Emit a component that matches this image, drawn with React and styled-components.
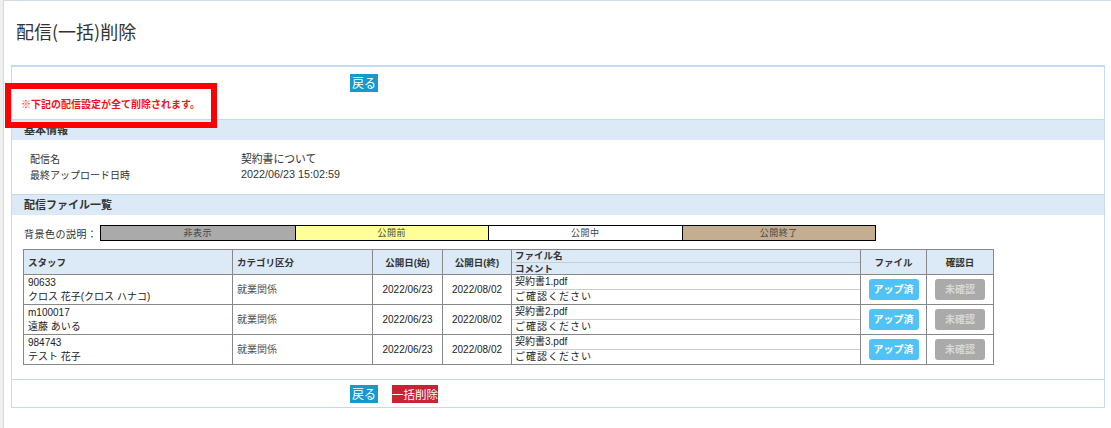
import styled, { createGlobalStyle } from "styled-components";

const GlobalStyle = createGlobalStyle`
  html { background: #efefef; }
  body {
    margin: 0;
    font-family: "Liberation Sans", "Noto Sans CJK JP", sans-serif;
    color: #333;
  }
`;

const rows = [
  { id: "90633", name: "クロス 花子(クロス ハナコ)", file: "契約書1.pdf" },
  { id: "m100017", name: "遠藤 あいる", file: "契約書2.pdf" },
  { id: "984743", name: "テスト 花子", file: "契約書3.pdf" },
];

const legend = [
  { label: "非表示", bg: "#aaaaaa" },
  { label: "公開前", bg: "#ffff99" },
  { label: "公開中", bg: "#ffffff" },
  { label: "公開終了", bg: "#c4ae90" },
];

const Root = styled.div`
  position: relative;
`;

const Page = styled.div`
  margin-left: 3px;
  min-height: 427px;
  background: #fff;
  border-left: 1px solid #d3dbe3;
  border-top: 1px solid #d3dbe3;
`;

const Title = styled.h1`
  margin: 0 0 20px;
  padding: 16px 0 0 12px;
  font-family: "Noto Sans CJK JP", sans-serif;
  font-size: 18px;
  line-height: 28px;
  font-weight: normal;
  color: #333;
`;

const Panel = styled.div`
  margin: 0 6px 0 7px;
  border: 1px solid #c3daef;
  border-top-width: 2px;
`;

const TopBar = styled.div`
  padding: 7px 0 8px;
`;

const ButtonRow = styled.div`
  display: flex;
  gap: 14px;
  padding-left: 338px;
`;

const Button = styled.button`
  border: 0;
  border-radius: 0;
  margin: 0;
  padding: 0 ${(p) => p.$pad ?? 2}px;
  height: 18px;
  font-family: "Noto Sans CJK JP", sans-serif;
  font-size: ${(p) => p.$size || 12}px;
  line-height: 18px;
  color: #fff;
  background: ${(p) => p.$bg || "#1799cc"};
`;

const Warning = styled.div`
  margin-top: 7px;
  padding-left: 9px;
  font-size: 10px;
  line-height: 12px;
  font-weight: bold;
  color: #f01515;
`;

const SectionHeader = styled.div`
  height: 20px;
  line-height: 20px;
  padding-left: 12px;
  border-top: 1px solid #c3daef;
  background: #dce9f7;
  font-size: 11px;
  font-weight: bold;
  color: #333;
`;

const InfoGrid = styled.div`
  display: grid;
  grid-template-columns: 211px 1fr;
  grid-auto-rows: 16px;
  align-items: center;
  padding: 10px 0 12px 18px;
  font-size: 10px;
`;

const InfoValue = styled.span`
  font-size: 10.8px;
`;

const Legend = styled.div`
  display: flex;
  align-items: center;
  margin-top: 10px;
  padding-left: 12px;
  font-size: 10px;
  letter-spacing: 0.5px;
`;

const LegendLabel = styled.span`
  width: 76px;
`;

const LegendBar = styled.div`
  display: grid;
  grid-template-columns: repeat(4, 1fr);
  width: 776px;
  height: 16px;
  border: 1px solid #000;
  box-sizing: border-box;
`;

const LegendCell = styled.div`
  background: ${(p) => p.$bg};
  border-left: ${(p) => (p.$first ? "0" : "1px solid #000")};
  text-align: center;
  font-size: 9px;
  line-height: 14px;
  color: #444;
`;

const Table = styled.table`
  margin: 8px 0 0 11px;
  width: 971px;
  table-layout: fixed;
  border-collapse: collapse;
  font-size: 10px;
`;

const Th = styled.th`
  height: 24px;
  padding: 0 ${(p) => (p.$flush ? 0 : 4)}px;
  border: 1px solid #888;
  background: #dce9f7;
  font-size: 9.5px;
  font-weight: bold;
  text-align: ${(p) => p.$align || "center"};
  color: #333;
`;

const Td = styled.td`
  height: 29px;
  padding: 0 ${(p) => (p.$flush ? 0 : 4)}px;
  border: 1px solid #888;
  text-align: ${(p) => p.$align || "left"};
  line-height: 14px;
  color: ${(p) => (p.$muted ? "#555" : "#222")};
`;

const SubLine = styled.div`
  height: ${(p) => p.$h}px;
  line-height: ${(p) => p.$h}px;
  padding-left: 3px;
  letter-spacing: ${(p) => (p.$spaced ? 1 : 0)}px;
  border-bottom: ${(p) => (p.$last ? "0" : "1px solid #ccc")};
`;

const Pill = styled.span`
  display: inline-block;
  width: 50px;
  height: 21px;
  line-height: 21px;
  border-radius: 3px;
  background: ${(p) => p.$bg};
  color: ${(p) => p.$fg};
  font-size: 10px;
  font-weight: bold;
  text-align: center;
  vertical-align: middle;
`;

const Footer = styled.div`
  margin-top: 14px;
  padding: 5px 0 4px;
  border-top: 1px solid #c3daef;
`;

const Annotation = styled.div`
  position: absolute;
  left: 5px;
  top: 83px;
  width: 212px;
  height: 45px;
  box-sizing: border-box;
  border: 6px solid #ff0000;
  pointer-events: none;
`;

export default function App() {
  return (
    <Root>
      <GlobalStyle />
      <Page>
        <Title>配信(一括)削除</Title>
        <Panel>
          <TopBar>
            <ButtonRow>
              <Button>戻る</Button>
            </ButtonRow>
            <Warning>※下記の配信設定が全て削除されます。</Warning>
          </TopBar>

          <SectionHeader>基本情報</SectionHeader>
          <InfoGrid>
            <span>配信名</span>
            <InfoValue>契約書について</InfoValue>
            <span>最終アップロード日時</span>
            <InfoValue>2022/06/23 15:02:59</InfoValue>
          </InfoGrid>

          <SectionHeader>配信ファイル一覧</SectionHeader>
          <Legend>
            <LegendLabel>背景色の説明：</LegendLabel>
            <LegendBar>
              {legend.map((l, i) => (
                <LegendCell key={l.label} $bg={l.bg} $first={i === 0}>
                  {l.label}
                </LegendCell>
              ))}
            </LegendBar>
          </Legend>

          <Table>
            <colgroup>
              <col style={{ width: 209 }} />
              <col style={{ width: 140 }} />
              <col style={{ width: 70 }} />
              <col style={{ width: 69 }} />
              <col style={{ width: 349 }} />
              <col style={{ width: 66 }} />
              <col style={{ width: 67 }} />
            </colgroup>
            <thead>
              <tr>
                <Th $align="left">スタッフ</Th>
                <Th $align="left">カテゴリ区分</Th>
                <Th>公開日(始)</Th>
                <Th>公開日(終)</Th>
                <Th $align="left" $flush>
                  <SubLine $h={12}>ファイル名</SubLine>
                  <SubLine $h={11} $last>コメント</SubLine>
                </Th>
                <Th>ファイル</Th>
                <Th>確認日</Th>
              </tr>
            </thead>
            <tbody>
              {rows.map((r) => (
                <tr key={r.id}>
                  <Td>
                    {r.id}
                    <br />
                    {r.name}
                  </Td>
                  <Td $muted>就業関係</Td>
                  <Td $align="center">2022/06/23</Td>
                  <Td $align="center">2022/08/02</Td>
                  <Td $flush>
                    <SubLine $h={14}>{r.file}</SubLine>
                    <SubLine $h={14} $last $spaced>ご確認ください</SubLine>
                  </Td>
                  <Td $align="center">
                    <Pill $bg="#4fc3f7" $fg="#fff">アップ済</Pill>
                  </Td>
                  <Td $align="center">
                    <Pill $bg="#aaaaaa" $fg="#d8d8d8">未確認</Pill>
                  </Td>
                </tr>
              ))}
            </tbody>
          </Table>

          <Footer>
            <ButtonRow>
              <Button>戻る</Button>
              <Button $bg="#c82235" $pad={0} $size={11.5}>一括削除</Button>
            </ButtonRow>
          </Footer>
        </Panel>
      </Page>
      <Annotation />
    </Root>
  );
}
